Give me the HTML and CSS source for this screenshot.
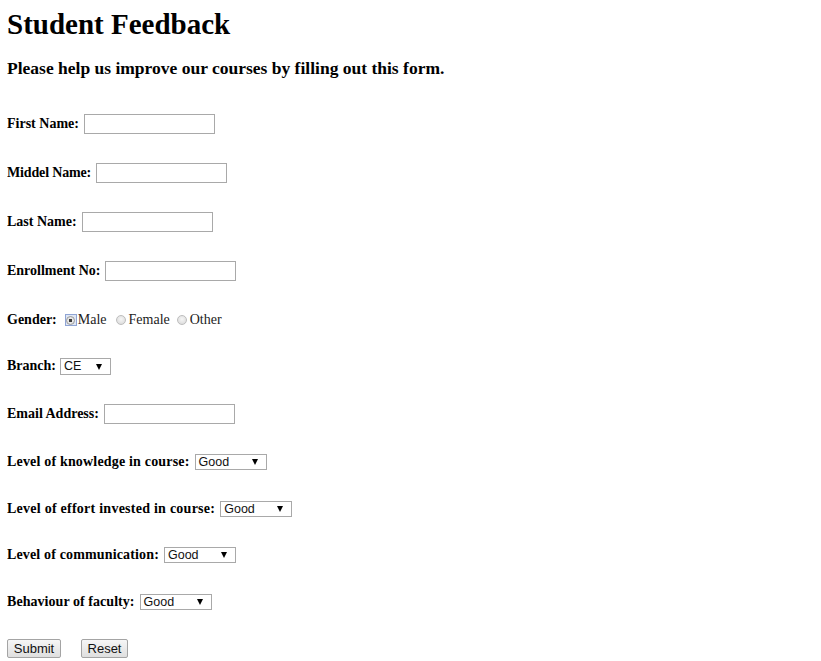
FILE: index.html
```html
<!DOCTYPE html>
<html>
<head>
<meta charset="utf-8">
<title>Student Feedback</title>
<link rel="stylesheet" href="styles.css">
</head>
<body>
<h1 class="title">Student Feedback</h1>
<p class="intro">Please help us improve our courses by filling out this form.</p>
<form class="form">
  <div class="row"><label class="lbl">First Name:</label><input class="txt" type="text"></div>
  <div class="row"><label class="lbl tight">Middel Name:</label><input class="txt" type="text"></div>
  <div class="row"><label class="lbl">Last Name:</label><input class="txt" type="text"></div>
  <div class="row"><label class="lbl">Enrollment No:</label><input class="txt" type="text"></div>
  <div class="row gap46"><label class="lbl">Gender:</label>
    <span class="radios">
      <span class="rbox focus"><input class="rad" type="radio" name="g" checked></span><span class="rtxt">Male</span>
      <span class="rbox"><input class="rad" type="radio" name="g"></span><span class="rtxt">Female</span>
      <span class="rbox rbox-other"><input class="rad" type="radio" name="g"></span><span class="rtxt">Other</span>
    </span>
  </div>
  <div class="row gap48"><label class="lbl lbl-branch">Branch:</label><span class="sel sel-ce">CE</span></div>
  <div class="row gap48"><label class="lbl">Email Address:</label><input class="txt" type="text"></div>
  <div class="row gap47"><label class="lbl wide">Level of knowledge in course:</label><span class="sel">Good</span></div>
  <div class="row gap46"><label class="lbl wider">Level of effort invested in course:</label><span class="sel">Good</span></div>
  <div class="row gap47"><label class="lbl semi2">Level of communication:</label><span class="sel">Good</span></div>
  <div class="row gap47 last"><label class="lbl semi">Behaviour of faculty:</label><span class="sel">Good</span></div>
  <div class="btns">
    <button class="btn btn-submit" type="button">Submit</button>
    <button class="btn btn-reset" type="button">Reset</button>
  </div>
</form>
</body>
</html>
```
FILE: styles.css
```css
body {
  margin: 8px 7px;
  font-family: "Liberation Serif", "Times New Roman", serif;
  color: #000;
  background: #fff;
}
.title {
  font-size: 29px;
  font-weight: bold;
  margin: 0;
  height: 32px;
  line-height: 32px;
}
.intro {
  font-size: 17.5px;
  font-weight: bold;
  margin: 18px 0 0;
  line-height: 20px;
}
.form {
  margin-top: 35px;
}
.row {
  display: flex;
  align-items: center;
  height: 22px;
  margin-bottom: 27px;
  font-size: 14px;
}
.row.gap46 { margin-bottom: 24px; }
.row.gap47 { margin-bottom: 25px; }
.row.gap48 { margin-bottom: 26px; }
.row.last { margin-bottom: 26px; }
.lbl {
  font-weight: bold;
  margin-right: 5px;
}
.lbl.tight { letter-spacing: -0.15px; }
.lbl.wide { letter-spacing: 0.18px; }
.lbl.wider { letter-spacing: 0.25px; }
.lbl.semi { letter-spacing: 0.05px; }
.lbl.semi2 { letter-spacing: 0.15px; }
.lbl.lbl-branch { margin-right: 4px; }
.txt {
  width: 131px;
  height: 20px;
  box-sizing: border-box;
  border: 1px solid #a9a9a9;
  margin: 0;
  padding: 0;
}
.radios {
  display: flex;
  align-items: center;
}
.rbox {
  display: flex;
  align-items: center;
  justify-content: center;
  width: 12px;
  height: 12px;
  box-sizing: border-box;
  margin: 0 2px 0 8px;
}
.rbox:first-child { margin-left: 3px; margin-right: 1px; }
.rbox.rbox-other { margin-left: 6px; }
.rbox.focus {
  border: 1px solid #8fa4d4;
  background: #dfe7f5;
}
.rad {
  appearance: none;
  -webkit-appearance: none;
  width: 10px;
  height: 10px;
  margin: 0;
  border: 1px solid #bdbdbd;
  border-radius: 50%;
  background: radial-gradient(circle at 50% 40%, #f6f6f6, #d6d6d6);
  box-sizing: border-box;
}
.rad:checked {
  width: 9px;
  height: 9px;
  border-color: #9a9a9a;
  background: radial-gradient(circle, #3a3a3a 0 1.5px, #e6e6e6 2px);
}
.rtxt {
  font-weight: normal;
  font-size: 14px;
  color: #222;
}
.sel {
  position: relative;
  display: inline-flex;
  align-items: center;
  box-sizing: border-box;
  width: 72px;
  height: 16px;
  border: 1px solid #a9a9a9;
  padding-left: 3px;
  font-family: "Liberation Sans", Arial, sans-serif;
  font-size: 12.5px;
  color: #111;
  background: #fff;
}
.sel::after {
  content: "";
  position: absolute;
  right: 8px;
  top: 4px;
  border-left: 3px solid transparent;
  border-right: 3px solid transparent;
  border-top: 6px solid #000;
}
.sel-ce {
  width: 51px;
  height: 17px;
}
.sel-ce::after { top: 5px; }
.btns {
  display: flex;
  gap: 20px;
}
.btn {
  font-family: "Liberation Sans", Arial, sans-serif;
  font-size: 13px;
  height: 19px;
  box-sizing: border-box;
  padding: 0;
  border: 1px solid #a4a4a4;
  border-radius: 2px;
  background: linear-gradient(#f6f6f6, #dfdfdf);
  color: #111;
  line-height: 17px;
}
.btn-submit { width: 54px; }
.btn-reset { width: 47px; }
```
